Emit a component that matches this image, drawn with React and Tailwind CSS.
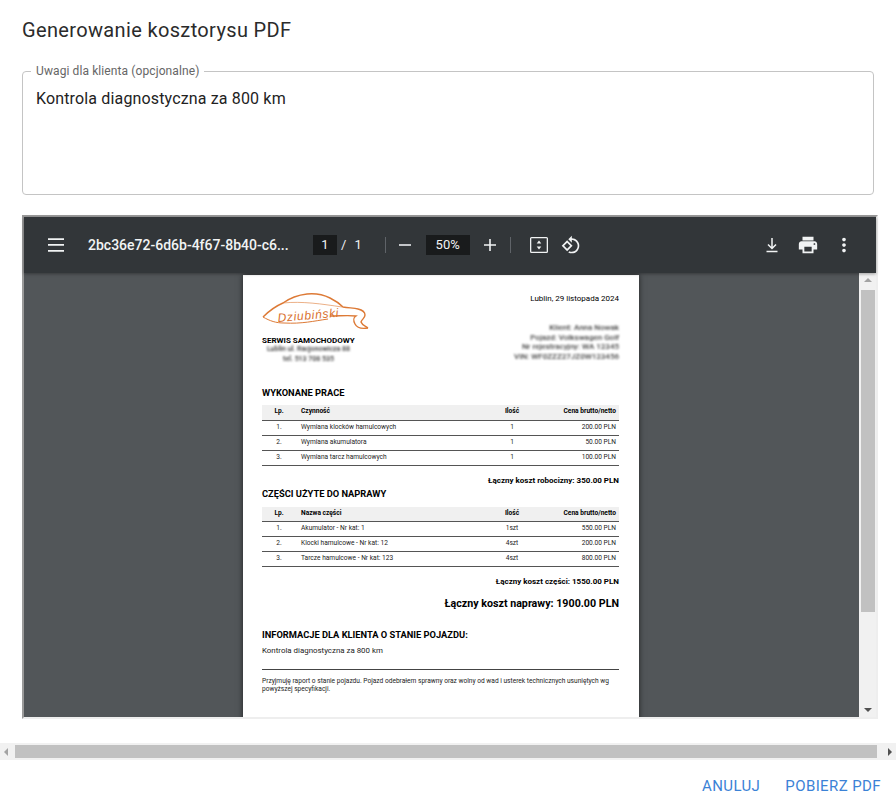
const works = [
  ["1.", "Wymiana klocków hamulcowych", "1", "200.00 PLN"],
  ["2.", "Wymiana akumulatora", "1", "50.00 PLN"],
  ["3.", "Wymiana tarcz hamulcowych", "1", "100.00 PLN"],
];

const parts = [
  ["1.", "Akumulator - Nr kat: 1", "1szt", "550.00 PLN"],
  ["2.", "Klocki hamulcowe - Nr kat: 12", "4szt", "200.00 PLN"],
  ["3.", "Tarcze hamulcowe - Nr kat: 123", "4szt", "800.00 PLN"],
];

const Icon = ({ d, size = 24 }) => (
  <svg width={size} height={size} viewBox="0 0 24 24" fill="currentColor">
    <path d={d} />
  </svg>
);

const Logo = () => (
  <svg width="110" height="38" viewBox="0 0 110 38" fill="none" stroke="#dd7a36" strokeWidth="1.4">
    <path d="M1 24 C 7 18 14 13 21 10 C 28 5 36 2 45 1 C 55 0 62 2 68 5 C 74 8 78 11 81 14 C 87 15 92 15 96 16 C 100 17 103 19 103 22 C 103 25 100 26 99 29 C 100 32 103 33 106 35" />
    <path d="M106 35 C 100 36 95 35 93 31 C 91 27 91 25 94 23 C 86 22 78 23 68 23" />
    <path d="M1 24 C 8 28 14 30 22 30 C 40 31 52 28 66 26" strokeWidth="1" />
    <path d="M21 10 C 40 8 60 11 80 14" strokeWidth="0.6" />
    <text x="16" y="29" transform="rotate(-5 16 29)" fontFamily="'Liberation Sans', sans-serif" fontStyle="italic" fontSize="12" fill="#d9712e" stroke="none" letterSpacing="0.7">Dziubiński</text>
  </svg>
);

const CostTable = ({ nameHeader, rows }) => (
  <table className="w-full table-fixed border-collapse text-[6.6px] text-[#222]">
    <thead>
      <tr className="h-[15px] bg-[#f0f0f0] font-bold text-black">
        <th className="w-[39px] border-b border-[#555] pr-[5px] text-center">Lp.</th>
        <th className="border-b border-[#555] text-left font-bold">{nameHeader}</th>
        <th className="w-[40px] border-b border-[#555] text-center">Ilość</th>
        <th className="w-[87px] border-b border-[#555] pr-[3px] text-right">Cena brutto/netto</th>
      </tr>
    </thead>
    <tbody>
      {rows.map((row) => (
        <tr key={row[0]} className="h-[15px]">
          <td className="border-b border-[#555] pr-[5px] text-center">{row[0]}</td>
          <td className="border-b border-[#555]">{row[1]}</td>
          <td className="border-b border-[#555] text-center">{row[2]}</td>
          <td className="border-b border-[#555] pr-[3px] text-right">{row[3]}</td>
        </tr>
      ))}
    </tbody>
  </table>
);

const PdfPage = () => (
  <div className="h-[460px] w-[396px] shrink-0 bg-white pt-[18px] pr-[20px] pl-[19px] font-['Roboto',sans-serif] text-black shadow-[0_0_6px_rgba(0,0,0,0.6)]">
    <div className="flex justify-between">
      <div className="w-[110px]">
        <Logo />
        <div className="mt-[5px] text-[8px] leading-[9px] font-bold whitespace-nowrap">SERWIS SAMOCHODOWY</div>
        <div className="w-[93px] text-center text-[7px] leading-[9.5px] font-medium text-[#333] blur-[1.2px]">
          <div className="whitespace-nowrap">Lublin ul. Racjonowicza 88</div>
          <div>tel. 513 708 535</div>
        </div>
      </div>
      <div className="pt-[1px] text-right text-[8px] leading-[9px]">
        <div>Lublin, 29 listopada 2024</div>
        <div className="mt-[20px] text-[8px] leading-[9.5px] font-medium text-[#444] blur-[1.2px]">
          <div>Klient: Anna Nowak</div>
          <div>Pojazd: Volkswagen Golf</div>
          <div>Nr rejestracyjny: WA 12345</div>
          <div>VIN: WF0ZZZ27JZ0W123456</div>
        </div>
      </div>
    </div>

    <h3 className="mt-[24px] text-[9.3px] leading-[10px] font-bold">WYKONANE PRACE</h3>
    <div className="mt-[7px]">
      <CostTable nameHeader="Czynność" rows={works} />
    </div>
    <div className="mt-[10px] text-right text-[8px] leading-[10px] font-bold">Łączny koszt robocizny: 350.00 PLN</div>
    <h3 className="mt-[3px] text-[9.3px] leading-[10px] font-bold">CZĘŚCI UŻYTE DO NAPRAWY</h3>
    <div className="mt-[8px]">
      <CostTable nameHeader="Nazwa części" rows={parts} />
    </div>
    <div className="mt-[10px] text-right text-[8px] leading-[10px] font-bold">Łączny koszt części: 1550.00 PLN</div>
    <div className="mt-[10px] text-right text-[10.7px] leading-[14px] font-bold">Łączny koszt naprawy: 1900.00 PLN</div>

    <h3 className="mt-[19px] text-[9.3px] leading-[10px] font-bold">INFORMACJE DLA KLIENTA O STANIE POJAZDU:</h3>
    <p className="mt-[6px] text-[7.9px] leading-[10px] text-[#222]">Kontrola diagnostyczna za 800 km</p>
    <div className="mt-[13px] border-t border-[#444] pt-[7px] text-[6.6px] leading-[8px] text-[#222]">
      Przyjmuję raport o stanie pojazdu. Pojazd odebrałem sprawny oraz wolny od wad i usterek technicznych usuniętych wg powyższej specyfikacji.
    </div>
  </div>
);

const Toolbar = () => (
  <div className="relative z-10 flex h-14 shrink-0 items-center bg-[#323639] px-[20px] font-['Roboto',sans-serif] text-[#f1f3f4] shadow-[0_1px_3px_rgba(0,0,0,0.35)]">
    <Icon d="M4 5.2h16v1.7H4zM4 11.1h16v1.7H4zM4 17h16v1.7H4z" size={24} />
    <div className="ml-[20px] w-[205px] text-sm font-medium whitespace-nowrap">2bc36e72-6d6b-4f67-8b40-c6...</div>
    <div className="ml-[20px] flex h-5 w-6 items-center justify-center bg-[#191b1c] text-[13px]">1</div>
    <span className="ml-[4px] text-[13px]">/</span>
    <span className="ml-[8px] text-[13px]">1</span>
    <div className="ml-[23px] h-[16px] w-px bg-[#5f6368]" />
    <div className="ml-[7px] flex text-[#e8eaed]">
      <Icon d="M6 11.2h12v1.6H6z" size={24} />
    </div>
    <div className="ml-[9px] flex h-5 w-[44px] items-center justify-center bg-[#191b1c] text-[13px]">50%</div>
    <div className="ml-[8px] flex">
      <Icon d="M11.2 6h1.6v5.2H18v1.6h-5.2V18h-1.6v-5.2H6v-1.6h5.2z" size={24} />
    </div>
    <div className="ml-[8px] h-[16px] w-px bg-[#5f6368]" />
    <svg className="ml-[19px]" width="18" height="16" viewBox="0 0 18 16" fill="currentColor">
      <path fillRule="evenodd" d="M1.5 0h15A1.5 1.5 0 0 1 18 1.5v13a1.5 1.5 0 0 1-1.5 1.5h-15A1.5 1.5 0 0 1 0 14.5v-13A1.5 1.5 0 0 1 1.5 0zM1.3 1.3v13.4h15.4V1.3z" />
      <path d="M9 3.5l2.3 3H6.7zM9 12.5l-2.3-3h4.6z" />
    </svg>
    <div className="ml-[13px] flex">
      <Icon d="M7.34 6.41L.86 12.9l6.49 6.48 6.49-6.48-6.5-6.49zM3.69 12.9l3.66-3.66L11 12.9l-3.66 3.66-3.65-3.66zm15.67-6.26C17.61 4.88 15.3 4 13 4V.76L8.76 5 13 9.24V6c1.79 0 3.58.68 4.95 2.05 2.73 2.73 2.73 7.17 0 9.9C16.58 19.32 14.79 20 13 20c-.97 0-1.94-.21-2.84-.61l-1.49 1.49C10.02 21.62 11.51 22 13 22c2.3 0 4.61-.88 6.36-2.64 3.52-3.51 3.52-9.21 0-12.72z" size={20} />
    </div>
    <div className="ml-auto flex items-center gap-[13px]">
      <svg width="24" height="24" viewBox="0 0 24 24" fill="none" stroke="currentColor" strokeWidth="1.5">
        <path d="M12 5v10M8 11.5l4 4 4-4M6.5 18.5h11" />
      </svg>
      <Icon d="M19 8H5c-1.66 0-3 1.34-3 3v6h4v4h12v-4h4v-6c0-1.66-1.34-3-3-3zm-3 11H8v-5h8v5zm3-7c-.55 0-1-.45-1-1s.45-1 1-1 1 .45 1 1-.45 1-1 1zm-1-9H6v4h12V3z" size={22} />
      <div className="flex px-px">
        <Icon d="M12 8c1.1 0 2-.9 2-2s-.9-2-2-2-2 .9-2 2 .9 2 2 2zm0 2c-1.1 0-2 .9-2 2s.9 2 2 2 2-.9 2-2-.9-2-2-2zm0 6c-1.1 0-2 .9-2 2s.9 2 2 2 2-.9 2-2-.9-2-2-2z" size={22} />
      </div>
    </div>
  </div>
);

const VerticalScrollbar = () => (
  <div className="flex w-[17px] shrink-0 flex-col items-center bg-[#f1f1f1] py-[5px]">
    <div className="h-0 w-0 border-x-[4px] border-b-[4px] border-x-transparent border-b-[#a3a3a3]" />
    <div className="mt-[8px] h-[322px] w-[14px] bg-[#c1c1c1]" />
    <div className="mt-auto h-0 w-0 border-x-[4px] border-t-[4px] border-x-transparent border-t-[#505050]" />
  </div>
);

const App = () => {
  return (
    <div className="flex h-[810px] w-[896px] flex-col overflow-hidden bg-white font-['Roboto',sans-serif]">
      <h2 className="mt-[16px] ml-[22px] text-xl leading-7 font-normal tracking-[0.35px] text-[#2b2b2b]">Generowanie kosztorysu PDF</h2>

      <fieldset className="mt-[21px] ml-[22px] h-[130px] w-[852px] rounded border border-[#c4c4c4] px-[13px]">
        <legend className="ml-[-5px] px-[5px] text-xs leading-[13px] tracking-[0.1px] text-[#666]">Uwagi dla klienta (opcjonalne)</legend>
        <p className="mt-[9px] text-base leading-6 tracking-[0.15px] text-[#222]">Kontrola diagnostyczna za 800 km</p>
      </fieldset>

      <div className="mt-[20px] ml-[22px] flex h-[504px] w-[856px] shrink-0 flex-col border-2 border-[#9a9a9a] border-r-[#eeeeee] border-b-[#eeeeee]">
        <Toolbar />
        <div className="flex min-h-0 flex-1">
          <div className="flex min-w-0 flex-1 justify-center overflow-hidden bg-[#525659] pt-[2px] pr-px">
            <PdfPage />
          </div>
          <VerticalScrollbar />
        </div>
      </div>

      <div className="mt-[24px] flex h-[17px] w-full shrink-0 items-center bg-[#f1f1f1] px-[4px]">
        <div className="h-0 w-0 border-y-[4px] border-r-[4px] border-y-transparent border-r-[#a3a3a3]" />
        <div className="mr-[11px] ml-[7px] h-[13px] flex-1 bg-[#c1c1c1]" />
        <div className="h-0 w-0 border-y-[4px] border-l-[4px] border-y-transparent border-l-[#505050]" />
      </div>

      <div className="mt-[14px] flex justify-end gap-[25px] pr-[15px] text-[15px] leading-[24px] tracking-[0.4px] text-[#3b82d6]">
        <button>ANULUJ</button>
        <button>POBIERZ PDF</button>
      </div>
    </div>
  );
};

export default App;
